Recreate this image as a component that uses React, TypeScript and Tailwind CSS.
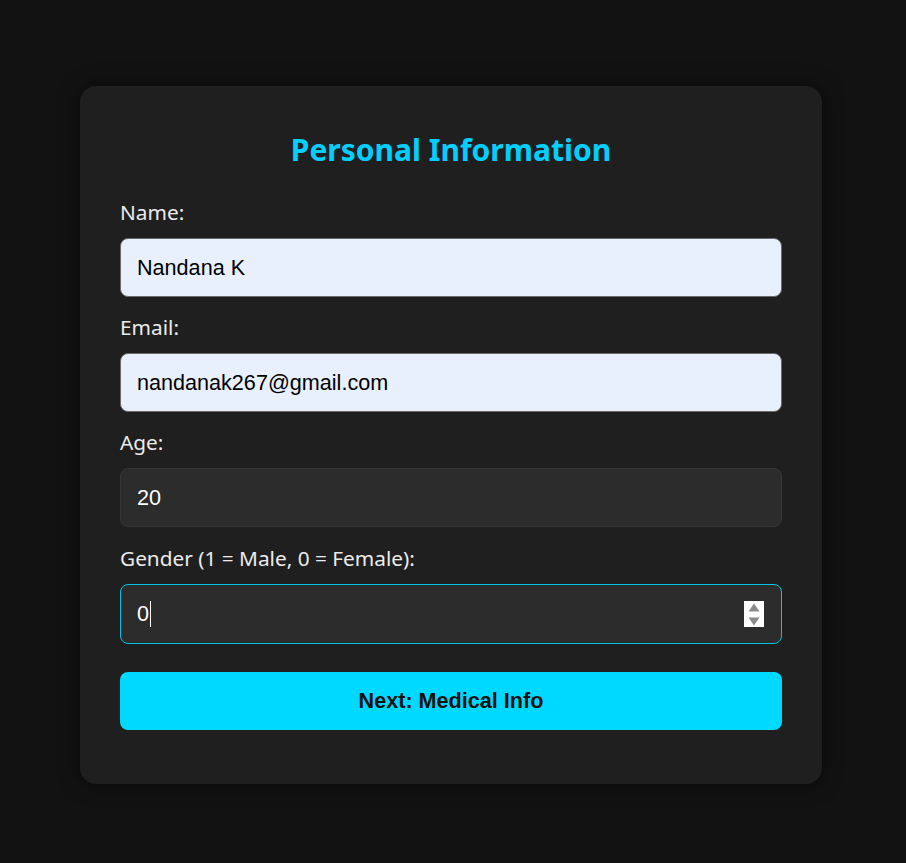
import React from 'react'

const labelCls = "block text-[20.8px] leading-[20px] text-[#ececec] mb-4 [font-family:'Noto_Sans',sans-serif]"
const inputCls =
  "block w-full h-[59px] px-4 rounded-lg border text-[21.6px] outline-none [font-family:'Liberation_Sans',Arial,sans-serif]"

function Field({ label, value, light, last }: { label: string; value: string; light?: boolean; last?: boolean }) {
  return (
    <div className={last ? 'mb-[21px]' : 'mb-5'}>
      <label className={labelCls}>{label}</label>
      <input
        readOnly
        value={value}
        className={
          inputCls +
          (light
            ? ' bg-[#e8f0fe] border-[#6b6b6b] text-black'
            : ' bg-[#2c2c2c] border-[#363636] text-white')
        }
      />
    </div>
  )
}

export default function App() {
  return (
    <div className="min-h-screen bg-[#121212] pt-[86px] pb-[80px]">
      <div className="ml-[80px] w-[742px] rounded-2xl bg-[#1f1f1f] px-10 pt-[44px] pb-[54px] shadow-[0_0_20px_rgba(0,0,0,0.5)]">
        <h2 className="text-center text-[30px] leading-[40px] font-bold text-[#00cfff] mb-[32px] [font-family:'Noto_Sans',sans-serif]">
          Personal Information
        </h2>

        <Field label="Name:" value="Nandana K" light />
        <Field label="Email:" value="nandanak267@gmail.com" light />
        <Field label="Age:" value="20" last />

        {/* Gender (focused number field) */}
        <div className="mb-5">
          <label className={labelCls}>Gender (1 = Male, 0 = Female):</label>
          <div className="relative flex items-center h-[60px] px-4 rounded-lg border border-[#00c4e6] bg-[#2c2c2c] text-white text-[21.6px] [font-family:'Liberation_Sans',Arial,sans-serif]">
            <span>0</span>
            <span className="ml-px inline-block w-px h-[26px] bg-white" />
            <div className="absolute right-[17px] top-[16px] w-5 h-[26px] bg-white flex flex-col items-center justify-center gap-[5px]">
              <svg width="12" height="9" viewBox="0 0 12 9">
                <path d="M6 0.5L11.5 8.5H0.5Z" fill="#8a8a8a" />
              </svg>
              <svg width="12" height="9" viewBox="0 0 12 9">
                <path d="M0.5 0.5H11.5L6 8.5Z" fill="#8a8a8a" />
              </svg>
            </div>
          </div>
        </div>

        <button className="mt-2 w-full h-[58px] rounded-lg bg-[#00d9ff] text-[#111] text-[21.6px] font-bold [font-family:'Liberation_Sans',Arial,sans-serif]">
          Next: Medical Info
        </button>
      </div>
    </div>
  )
}
